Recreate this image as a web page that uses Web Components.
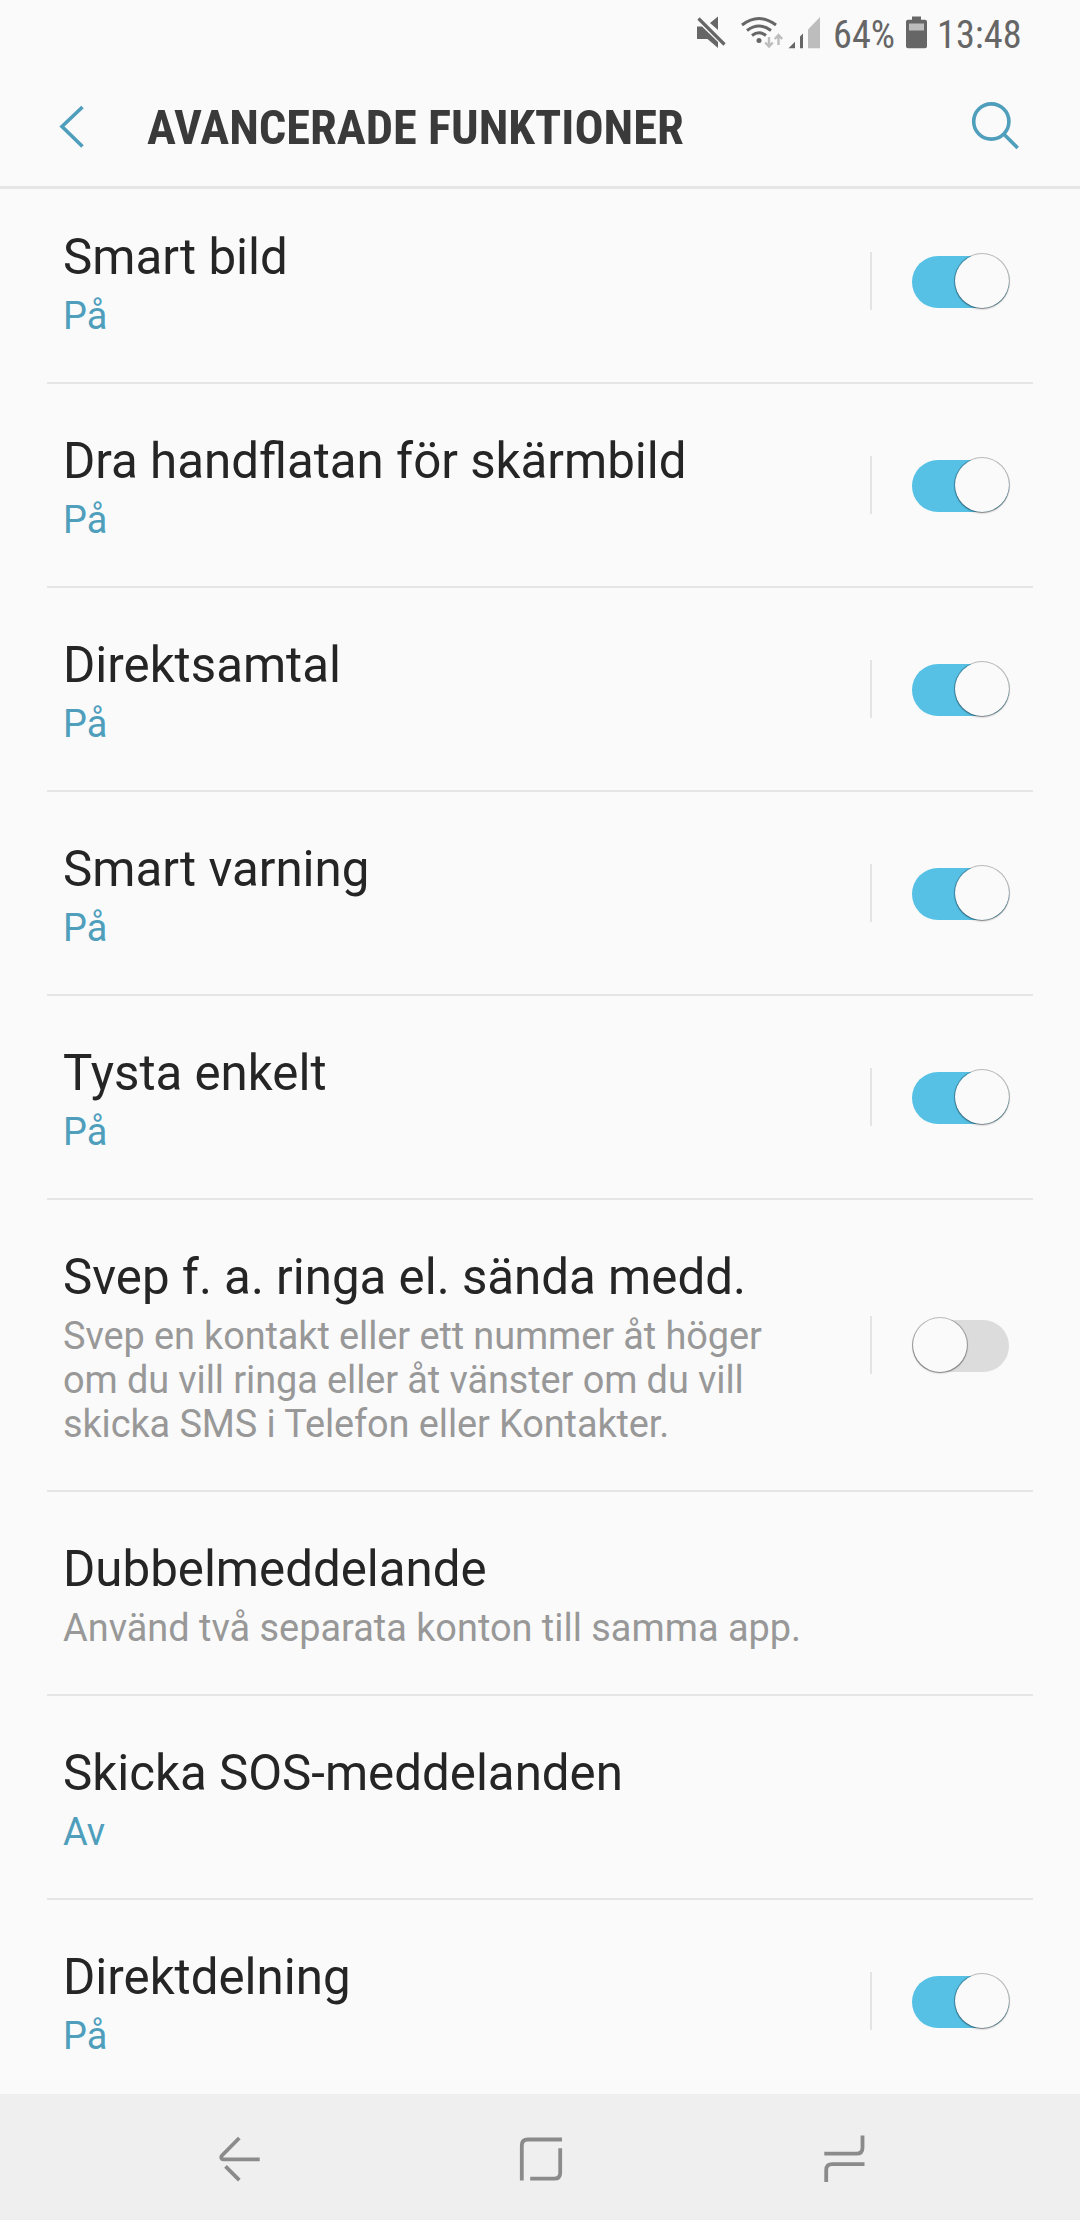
<!DOCTYPE html>
<html lang="sv">
<head>
<meta charset="utf-8">
<title>Avancerade funktioner</title>
<style>
html,body{margin:0;padding:0;background:#fafafa}
body{font-family:Roboto,"Noto Sans",sans-serif;width:1080px;height:2220px;overflow:hidden}
</style>
</head>
<body>
<settings-screen></settings-screen>
<script>
const define = (name, html, setup) => {
  const tpl = document.createElement('template');
  tpl.innerHTML = html;
  customElements.define(name, class extends HTMLElement {
    constructor() {
      super();
      this.attachShadow({mode: 'open'}).append(tpl.content.cloneNode(true));
    }
    connectedCallback() { if (setup) setup(this); }
  });
};

define('status-bar', `
<style>
:host{display:flex;height:66px;box-sizing:border-box;padding-left:694px;color:#666;font-size:38.300px;line-height:46px}
svg{flex:none;display:block}
.t{display:block;flex:none;height:46px;margin-top:12px;white-space:nowrap;font-family:"Roboto Condensed",Roboto,sans-serif;font-stretch:75%}
.pct{width:60px;margin-left:7px}
.time{width:90px;margin-left:12px}
</style>
<svg width="132" height="66" viewBox="694 0 132 66">
  <g fill="#666">
    <path d="M697 26.500h5L718 42v6l-10.500-9H697zM710 23l8-6.500V30z"/>
    <path d="M698.500 18.500l26 26" stroke="#666" stroke-width="3.200"/>
    <circle cx="759" cy="40.500" r="2.500"/>
    <path d="M788.500 48.300l6.500-6.500v6.500zM800 36.500l3-3v14.800h-3z"/>
  </g>
  <g fill="none" stroke="#666" stroke-width="3">
    <path d="M742 25q17-13 34 0M747 30.500q12-9 24 0M752 35.500q7-5.500 14 0"/>
  </g>
  <path fill="#bdbdbd" d="M808 29.500L820 17v31.300h-12z"/>
  <path fill="none" stroke="#bdbdbd" stroke-width="2.400" d="M769 37v9M765.200 42.500l3.800 4 3.800-4M778.500 45v-9.500M774.800 39l3.700-4 3.700 4"/>
</svg>
<span class="t pct">64%</span>
<svg width="32" height="66" viewBox="893 0 32 66" overflow="visible">
  <path fill="#666" d="M912 16.500h9v3.300h4q2 0 2 2v24.500q0 2-2 2h-17q-2 0-2-2V21.800q0-2 2-2h4z"/>
  <path fill="#bdbdbd" d="M909 23.500h15v7h-15z"/>
</svg>
<span class="t time">13:48</span>
`);

define('app-bar', `
<style>
:host{display:flex;box-sizing:border-box;height:123px;border-bottom:3px solid #e6e6e6;padding:0 60px 0 57px;align-items:flex-start}
svg{display:block;flex:none}
h1{margin:32px 0 0 33px;flex:1;font:700 48.400px/60px "Roboto Condensed",Roboto,sans-serif;font-stretch:75%;color:#3a3a3a;white-space:nowrap}
</style>
<svg width="57" height="120" viewBox="57 66 57 120"><path d="M82.500 107L62 126.500l20.500 20" fill="none" stroke="#4e9ebc" stroke-width="3.600"/></svg>
<h1><slot></slot></h1>
<svg width="50" height="120" viewBox="970 66 50 120"><g fill="none" stroke="#4e9ebc" stroke-width="3.600"><circle cx="991.300" cy="121.500" r="17.600"/><path d="M1003.700 134l14 14"/></g></svg>
`);

define('toggle-switch', `
<style>
:host{display:flex;box-sizing:border-box;width:97px;height:52px;border-radius:26px;background:#dcdcdc;align-items:center}
i{display:block;flex:none;width:54px;height:54px;margin:-3px 0 0 1px;border-radius:50%;background:#fafafa;box-shadow:0 0 0 1px rgba(0,0,0,.24),0 1px 2px 0 rgba(0,0,0,.36)}
:host([on]){background:#56c0e5}
:host([on]) i{margin-left:43px}
</style><i></i>
`);

define('setting-row', `
<style>
:host{display:flex;flex-direction:column;flex:none;margin:0 47px}
.row{display:flex;min-height:202px;box-sizing:border-box}
.text{flex:1;padding:47px 50px 44px 16px}
.title{font-size:49.250px;line-height:60px;color:#252525;white-space:nowrap}
.sub{margin-top:7px;font-size:37.900px;line-height:44px;color:#989898;letter-spacing:var(--sub-tracking,0)}
:host([active]) .sub{color:#4e9ebc}
.ctl{display:flex;flex:none;align-items:center;width:171px}
.ctl b{display:block;width:2px;height:58px;background:#e4e4e4;margin-left:8px}
.ctl toggle-switch{margin:2px 0 0 40px}
hr{border:0;margin:0;height:2px;background:#e5e5e5}
</style>
<div class="row"><div class="text"><div class="title"><slot name="title"></slot></div><div class="sub"><slot></slot></div></div></div>
<hr>
`, el => {
  const mode = el.getAttribute('toggle');
  if (!mode || el.shadowRoot.querySelector('.ctl')) return;
  const box = document.createElement('div');
  box.className = 'ctl';
  box.append(document.createElement('b'));
  const sw = document.createElement('toggle-switch');
  if (mode === 'on') sw.setAttribute('on', '');
  box.append(sw);
  el.shadowRoot.querySelector('.row').append(box);
});

define('nav-bar', `
<style>
:host{display:flex;flex:none;box-sizing:border-box;height:126px;background:#efefef;justify-content:space-between;padding:0 212px 0 216px}
svg{display:block}
path{fill:none;stroke:#8b8b8b;stroke-width:3.800}
</style>
<svg width="48" height="126" viewBox="216 2094 48 126"><path d="M239.300 2138l-17.300 17.500q-1.200 1.300-.6 2.600t2.100 1.200h36.200M225.500 2166.300l13.800 13.800"/></svg>
<svg width="48" height="126" viewBox="518 2094 48 126"><path d="M521.800 2180.500v-35q0-6 6-6h34.200M560.200 2148.300v24.400q0 6-6 6h-24"/></svg>
<svg width="48" height="126" viewBox="820 2094 48 126"><path d="M824.300 2153.700h32.200q6 0 6-6V2135.600M864.500 2164.200h-32.300q-6 0-6 6V2182"/></svg>
`);

define('settings-screen', `
<style>
:host{display:flex;flex-direction:column;width:1080px;height:2220px;background:#fafafa}
main{flex:1;min-height:0;overflow:hidden;display:flex;flex-direction:column}
main setting-row:first-child{margin-top:-9px}
.long{--sub-tracking:-.09px}
</style>
<status-bar></status-bar>
<app-bar>AVANCERADE FUNKTIONER</app-bar>
<main>
<setting-row active toggle="on"><span slot="title">Smart bild</span>På</setting-row>
<setting-row active toggle="on"><span slot="title">Dra handflatan för skärmbild</span>På</setting-row>
<setting-row active toggle="on"><span slot="title">Direktsamtal</span>På</setting-row>
<setting-row active toggle="on"><span slot="title">Smart varning</span>På</setting-row>
<setting-row active toggle="on"><span slot="title">Tysta enkelt</span>På</setting-row>
<setting-row class="long" toggle="off"><span slot="title">Svep f. a. ringa el. sända medd.</span>Svep en kontakt eller ett nummer åt höger om du vill ringa eller åt vänster om du vill skicka SMS i Telefon eller Kontakter.</setting-row>
<setting-row><span slot="title">Dubbelmeddelande</span>Använd två separata konton till samma app.</setting-row>
<setting-row active><span slot="title">Skicka SOS-meddelanden</span>Av</setting-row>
<setting-row active toggle="on"><span slot="title">Direktdelning</span>På</setting-row>
</main>
<nav-bar></nav-bar>
`);
</script>
</body>
</html>
